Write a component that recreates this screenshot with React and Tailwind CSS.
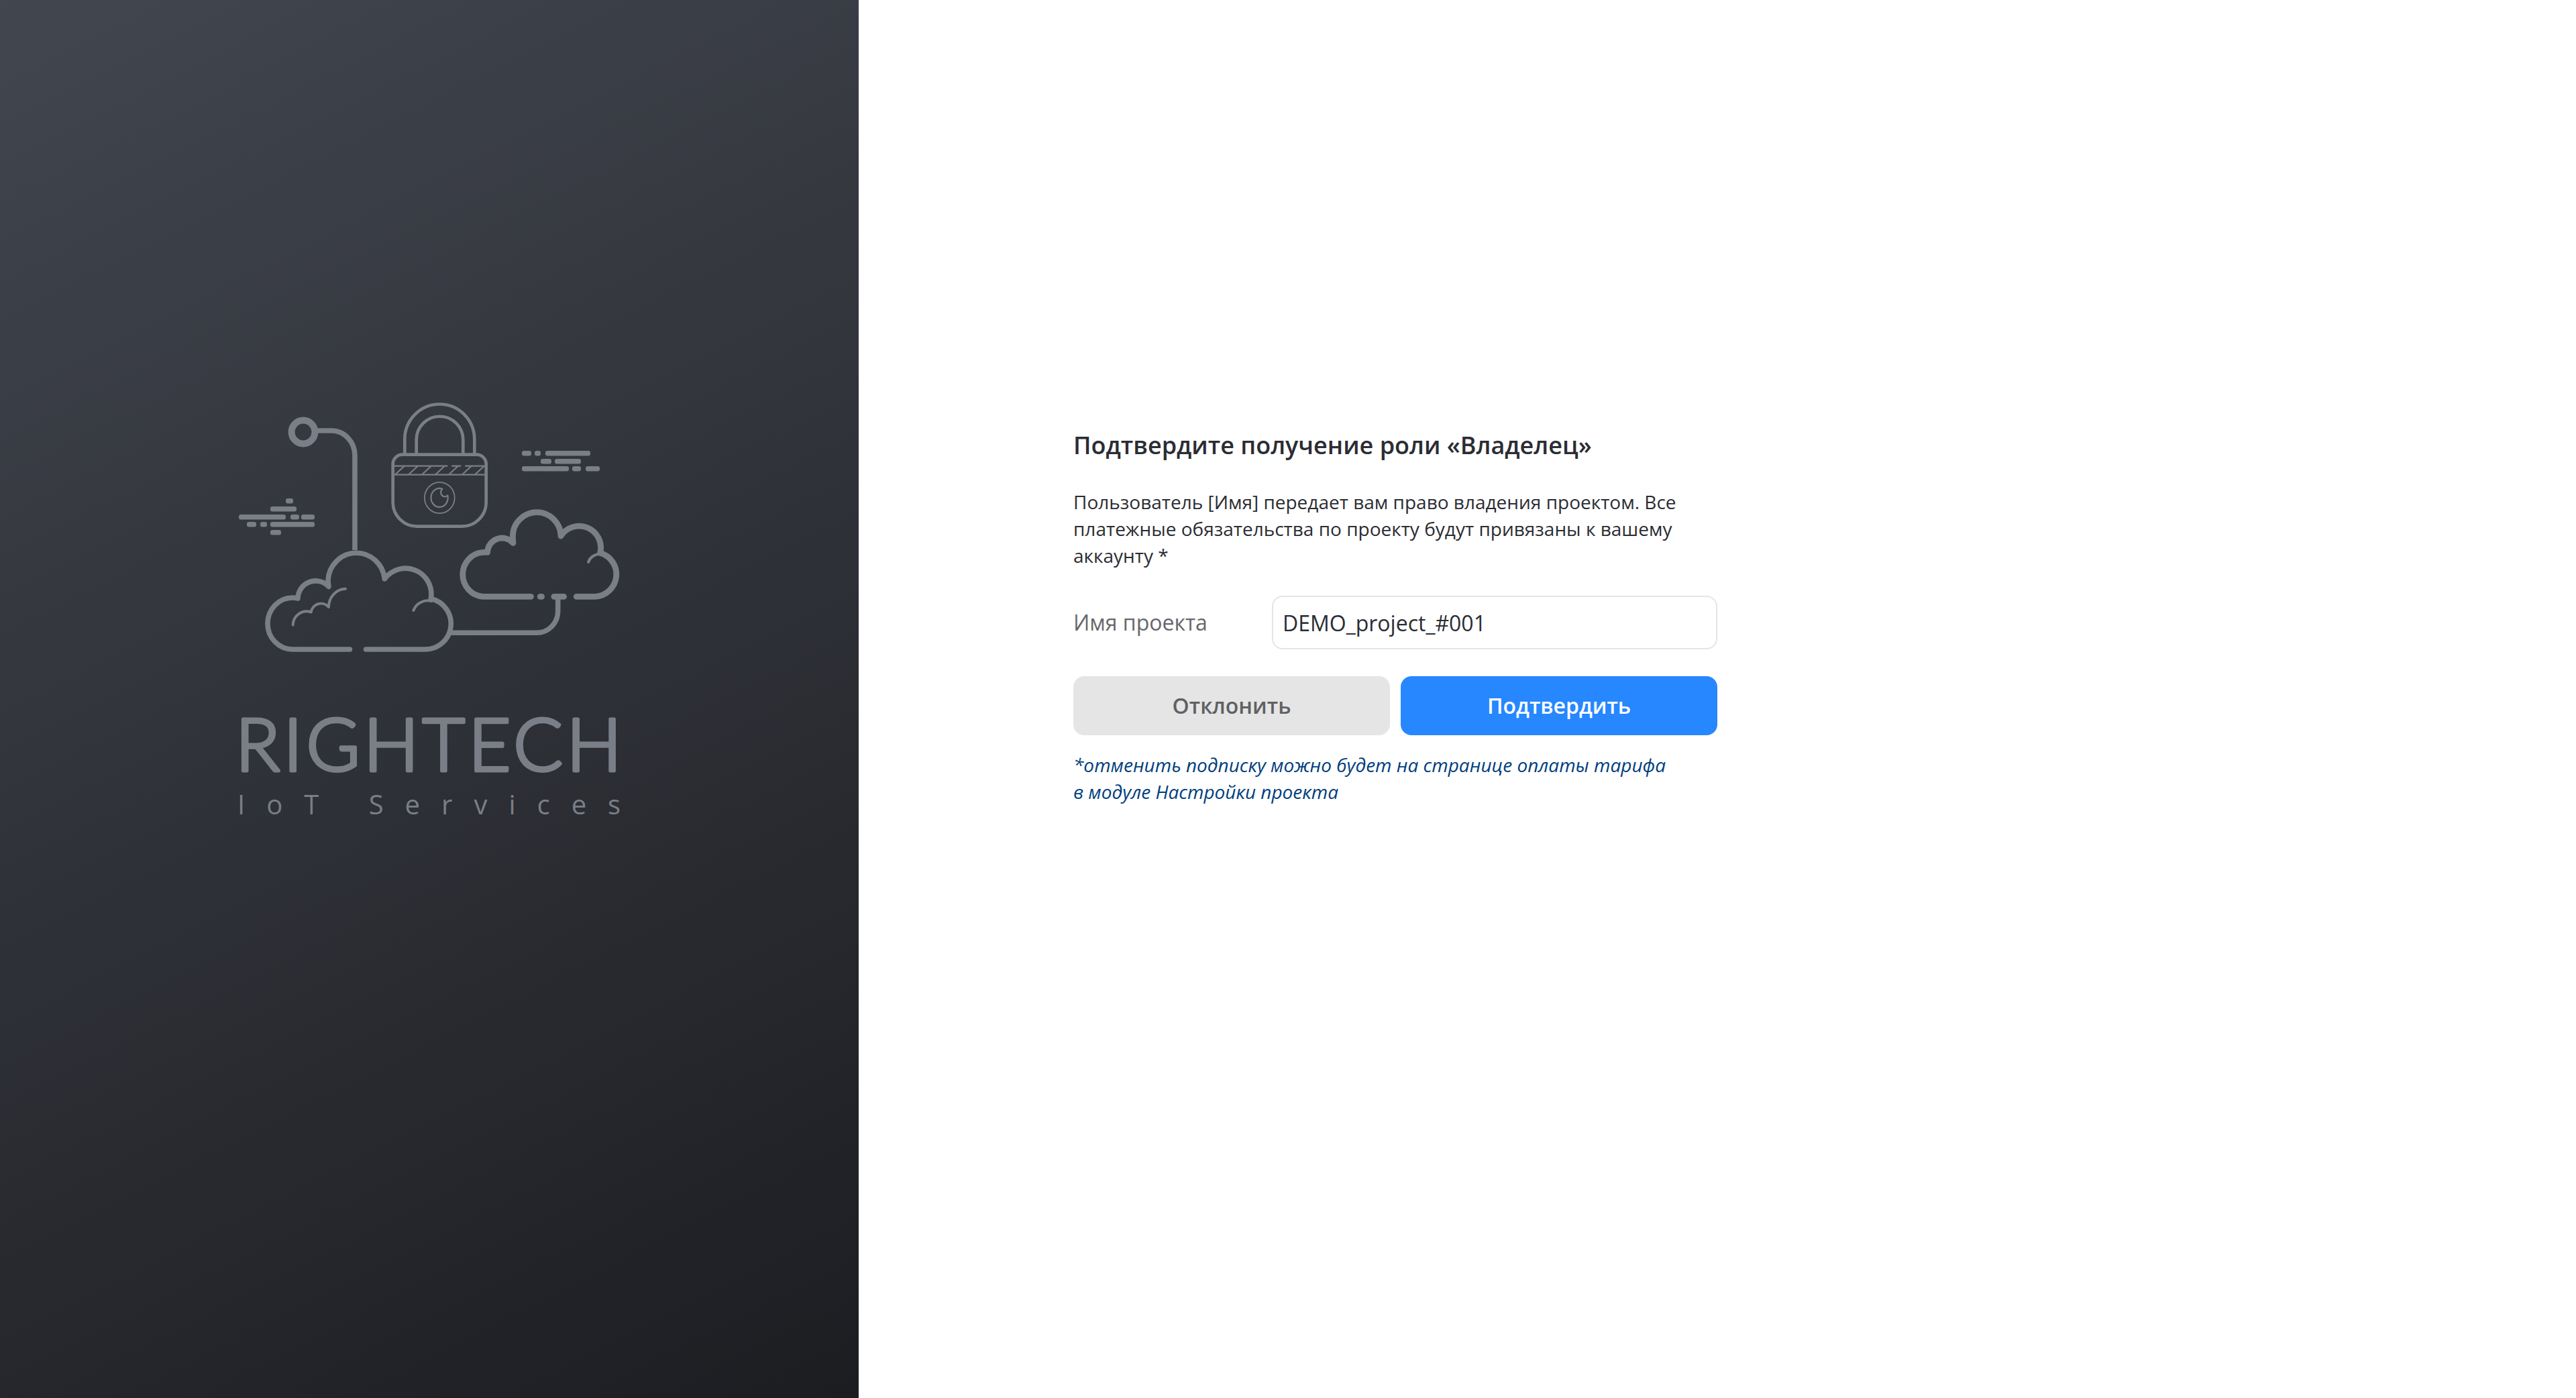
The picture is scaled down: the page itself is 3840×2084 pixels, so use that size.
import React, { useState } from 'react';

const leftDashes = [
  [86, 163, 11],
  [63, 175, 39],
  [16, 187, 70],
  [93, 187, 13],
  [109, 187, 20],
  [28, 198, 14],
  [48, 198, 10],
  [63, 198, 66],
  [63, 210, 16],
];

const rightDashes = [
  [438, 92, 14],
  [457, 92, 9],
  [473, 92, 67],
  [466, 104, 16],
  [487, 104, 39],
  [438, 115, 70],
  [513, 115, 13],
  [533, 115, 21],
];

const hatches = [250, 270, 290, 310, 330, 350, 369];

function Logo() {
  return (
    <svg
      viewBox="0 0 600 660"
      className="w-[600px] max-w-full h-auto overflow-visible text-[#7a7e87]"
      fill="none"
      stroke="currentColor"
      strokeLinecap="round"
      strokeLinejoin="round"
      role="img"
      aria-label="Rightech IoT Services"
    >
      {/* Wind dashes */}
      <g fill="currentColor" stroke="none">
        {[...leftDashes, ...rightDashes].map(([x, y, w]) => (
          <rect key={`${x}-${y}`} x={x} y={y} width={w} height="7.4" rx="3" />
        ))}
      </g>

      {/* Sensor and its wire */}
      <circle cx="112" cy="64" r="17.4" strokeWidth="10" />
      <path d="M134 62H154A35 37 0 0 1 189 99V240" strokeWidth="7.6" strokeLinecap="butt" />

      {/* Bottom cloud */}
      <g strokeWidth="7.6">
        <path d="M181.5 388H96A37 38.4 0 0 1 96 311Q100 311 104 312A26.5 26.5 0 0 1 150 294.5Q149 289 149 284.5A42.3 43 0 0 1 233.3 283A38.5 38.5 0 0 1 302.3 312.5A38.2 38.2 0 0 1 294 388H205.5" />
        <path d="M332 363.3H460A31.7 32 0 0 0 491.7 331V311" strokeLinecap="butt" />
      </g>
      <g strokeWidth="4">
        <path d="M96.7 351.5A20.5 20.5 0 0 1 123.7 332.5A15 15 0 0 1 150 325A26 27 0 0 1 175 297.7" />
        <path d="M276.3 330A23 23 0 0 1 303 316" />
        <path d="M537 258A18 18 0 0 1 555 246" />
      </g>

      {/* Top cloud */}
      <g strokeWidth="8.8">
        <path d="M451.5 309.3H380A32 33 0 0 1 380 243.4H386.5A22 22 0 0 1 425 229.5Q424.4 224 424.4 220A35.8 35.8 0 0 1 496 219A32.4 32.4 0 0 1 554.7 244.2A33.2 33.2 0 0 1 547 309.3H519.2" />
        <path d="M465.2 309.3H467.6M485.8 309.3H500.6" />
      </g>

      {/* Padlock */}
      <g strokeWidth="4.7">
        <path d="M259.7 97.7H370.7A14 14 0 0 1 384.7 111.7V168.7A36 36 0 0 1 348.7 204.7H281.7A36 36 0 0 1 245.7 168.7V111.7A14 14 0 0 1 259.7 97.7Z" />
        <path d="M263.3 97V75A52 52.5 0 0 1 367.3 75V97M280.7 97V75.5A34.8 34.8 0 0 1 350.3 75.5V97" />
      </g>
      <g strokeWidth="2.2">
        <path d="M248 114.6H326.5M334 114.6H346.5M354 114.6H383M248 127.7H383" />
        {hatches.map((x) => (
          <path key={x} d={`M${x} 126.5l12 -11`} />
        ))}
        <ellipse cx="315.3" cy="162" rx="22.4" ry="23.2" strokeWidth="1.8" />
        <path d="M319.5 148.8A12.6 14 0 1 0 327.3 158.5C325 160.8 321.5 161.3 319 158.5C316.3 155.6 316.6 151.5 319.5 148.8Z" />
      </g>

      {/* Name */}
      <text
        x="11"
        y="569"
        fill="currentColor"
        strokeWidth="5"
        className="font-[Lato,sans-serif] font-light text-[109px] tracking-wider"
      >
        RIGHTECH
      </text>
      <text
        x="14"
        y="634"
        fill="currentColor"
        stroke="none"
        className="font-['Open_Sans',sans-serif] text-[40px] tracking-[32px]"
      >
        IoT Services
      </text>
    </svg>
  );
}

export default function App() {
  const [projectName, setProjectName] = useState('DEMO_project_#001');

  return (
    <div className="min-h-screen grid grid-cols-3 bg-white font-['Open_Sans',sans-serif] text-[#2b2d33]">
      <aside className="flex justify-center items-start pt-[580px] bg-[linear-gradient(153deg,#42464f_0%,#1c1d21_100%)]">
        <Logo />
      </aside>

      <main className="col-span-2 pt-[640px] pl-[320px]">
        <form
          className="w-[960px] max-w-full flex flex-col gap-10"
          onSubmit={(e) => e.preventDefault()}
        >
          <h1 className="text-4xl leading-12 font-semibold">
            Подтвердите получение роли «Владелец»
          </h1>

          <p className="text-[28px] leading-10">
            Пользователь [Имя] передает вам право владения проектом. Все платежные
            обязательства по проекту будут привязаны к вашему аккаунту *
          </p>

          <div className="flex items-center">
            <label htmlFor="project-name" className="w-[296px] shrink-0 text-[32px] text-[#66686c]">
              Имя проекта
            </label>
            <input
              id="project-name"
              type="text"
              value={projectName}
              onChange={(e) => setProjectName(e.target.value)}
              className="h-20 flex-1 min-w-0 px-[14px] rounded-2xl border-2 border-[#e5e5e5] text-[32px] outline-none"
            />
          </div>

          <div className="flex flex-col gap-6">
            <div className="grid grid-cols-2 gap-4">
              <button
                type="button"
                className="h-22 rounded-2xl bg-[#e5e5e5] text-[32px] font-semibold text-[#5f6164]"
              >
                Отклонить
              </button>
              <button
                type="submit"
                className="h-22 rounded-2xl bg-[#2787ff] text-[32px] font-semibold text-white"
              >
                Подтвердить
              </button>
            </div>

            <p className="text-[28px] leading-10 italic text-[#003e7e]">
              *отменить подписку можно будет на странице оплаты тарифа
              <br />в модуле Настройки проекта
            </p>
          </div>
        </form>
      </main>
    </div>
  );
}
